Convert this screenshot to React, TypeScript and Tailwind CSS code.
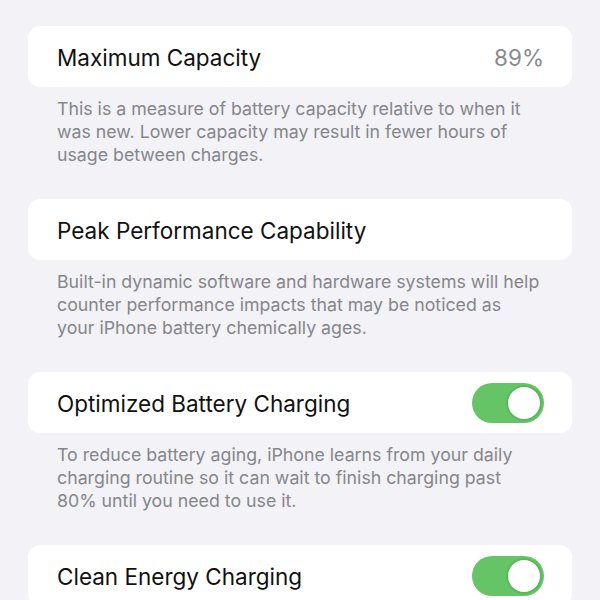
import React from "react";

function Toggle() {
  return (
    <div className="relative h-[40px] w-[72px] rounded-full bg-[#65c466]">
      <div className="absolute right-[2px] top-[2px] h-[36px] w-[36px] rounded-full border-2 border-[#5bb85e] bg-white" />
    </div>
  );
}

type Section = {
  title: string;
  value?: string;
  toggle?: boolean;
  lines: string[];
};

const sections: Section[] = [
  {
    title: "Maximum Capacity",
    value: "89%",
    lines: [
      "This is a measure of battery capacity relative to when it",
      "was new. Lower capacity may result in fewer hours of",
      "usage between charges.",
    ],
  },
  {
    title: "Peak Performance Capability",
    lines: [
      "Built-in dynamic software and hardware systems will help",
      "counter performance impacts that may be noticed as",
      "your iPhone battery chemically ages.",
    ],
  },
  {
    title: "Optimized Battery Charging",
    toggle: true,
    lines: [
      "To reduce battery aging, iPhone learns from your daily",
      "charging routine so it can wait to finish charging past",
      "80% until you need to use it.",
    ],
  },
  {
    title: "Clean Energy Charging",
    toggle: true,
    lines: [],
  },
];

export default function App() {
  return (
    <div
      className="h-[600px] w-[600px] overflow-hidden bg-[#f2f2f7] px-[28px] pt-[26px]"
      style={{ fontFamily: "Inter, 'Liberation Sans', sans-serif" }}
    >
      {sections.map((s) => (
        <div key={s.title} className="mb-[33px]">
          <div className="flex h-[61px] items-center justify-between rounded-[12px] bg-white pl-[29px] pr-[28px]">
            <span className="pt-[2px] text-[22.5px] text-[#111111]">{s.title}</span>
            {s.value && <span className="pt-[2px] text-[22.5px] text-[#8a8a8e]">{s.value}</span>}
            {s.toggle && <Toggle />}
          </div>
          {s.lines.length > 0 && (
            <div className="pl-[29px] pt-[10px] text-[17.75px] leading-[23px] text-[#86868b]">
              {s.lines.map((l) => (
                <div key={l}>{l}</div>
              ))}
            </div>
          )}
        </div>
      ))}
    </div>
  );
}
